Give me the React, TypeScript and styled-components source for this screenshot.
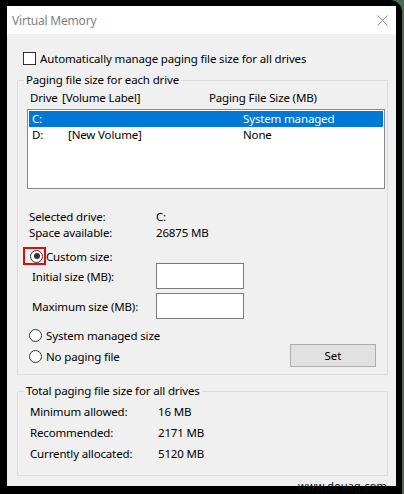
import React from 'react'
import styled, { createGlobalStyle } from 'styled-components'

const GlobalStyle = createGlobalStyle`
  html, body {
    margin: 0;
    padding: 0;
    background: #4e6b52;
  }
  body {
    font-family: 'Noto Sans', 'Liberation Sans', sans-serif;
    font-size: 11.5px;
    letter-spacing: -0.15px;
    color: #000;
  }
`

const Frame = styled.div`
  position: relative;
  width: 402px;
  height: 494px;
  box-sizing: border-box;
  padding: 6px 6px 8px 7px;
  background: #000;
  border-top-right-radius: 12px;
`

const Window = styled.div`
  height: 100%;
  display: flex;
  flex-direction: column;
  background: #f0f0f0;
`

const TitleBar = styled.div`
  height: 28px;
  flex: none;
  display: flex;
  align-items: center;
  justify-content: space-between;
  padding: 0 8px 0 5px;
  background: #fff;
`

const Title = styled.span`
  color: #808080;
  font-size: 12px;
  letter-spacing: -0.2px;
`

const Body = styled.div`
  display: flex;
  flex-direction: column;
  padding: 16px 8px 0 10px;
`

const CheckRow = styled.label`
  height: 16px;
  display: flex;
  align-items: center;
  gap: 4px;
  padding-left: 6px;
`

const CheckBox = styled.span`
  width: 11px;
  height: 11px;
  border: 1px solid #333;
  background: #fff;
`

const Group = styled.fieldset<{ $top: number; $bottom: number }>`
  margin: ${(p) => p.$top}px 0 0 0;
  padding: 0 0 ${(p) => p.$bottom}px 0;
  border: 1px solid #dcdcdc;
  min-width: 0;
`

const Legend = styled.legend`
  margin-left: 6px;
  padding: 0 2px;
  line-height: 16px;
`

const HeaderRow = styled.div`
  display: grid;
  grid-template-columns: 32px 147px 1fr;
  height: 16px;
  line-height: 16px;
  margin-top: 2px;
  padding-left: 12px;
`

const ListBox = styled.div`
  height: 76px;
  margin: 3px 2px 0 9px;
  padding: 1px;
  border: 1px solid #828790;
  background: #fff;
`

const ListRow = styled.div<{ $selected?: boolean }>`
  display: grid;
  grid-template-columns: 36px 175px 1fr;
  height: 16px;
  line-height: 16px;
  padding-left: 3px;
  background: ${(p) => (p.$selected ? '#0078d7' : 'transparent')};
  color: ${(p) => (p.$selected ? '#fff' : '#000')};
`

const InfoGrid = styled.div<{ $top: number; $gap: number; $left: number; $col: number }>`
  display: grid;
  grid-template-columns: ${(p) => p.$col}px 1fr;
  row-gap: ${(p) => p.$gap}px;
  margin-top: ${(p) => p.$top}px;
  padding-left: ${(p) => p.$left}px;
  line-height: 16px;
`

const RadioRow = styled.label<{ $left: number }>`
  height: 16px;
  display: flex;
  align-items: center;
  gap: 4px;
  padding-left: ${(p) => p.$left}px;
`

const Radio = styled.span<{ $checked?: boolean }>`
  position: relative;
  width: 11px;
  height: 11px;
  flex: none;
  border: 1px solid #333;
  border-radius: 50%;
  background: #fff;
  &::after {
    content: '';
    display: ${(p) => (p.$checked ? 'block' : 'none')};
    position: absolute;
    left: 2.5px;
    top: 2.5px;
    width: 6px;
    height: 6px;
    border-radius: 50%;
    background: #333;
  }
`

const Highlight = styled.span`
  display: flex;
  align-items: center;
  box-sizing: border-box;
  width: 23px;
  height: 18px;
  margin: -1px 0 -1px -7px;
  padding-left: 5px;
  border: 2px solid #e00d0d;
`

const CustomRow = styled.div`
  height: 16px;
  display: flex;
  align-items: center;
  margin-top: 7px;
  padding-left: 12px;
`

const FieldRow = styled.div`
  display: grid;
  grid-template-columns: 124px 88px;
  align-items: center;
  height: 26px;
  padding-left: 14px;
`

const Fields = styled.div`
  display: flex;
  flex-direction: column;
  gap: 4px;
  margin-top: -1px;
`

const Input = styled.input`
  box-sizing: border-box;
  width: 88px;
  height: 26px;
  margin: 0;
  border: 1px solid #7a7a7a;
  background: #fff;
  font: inherit;
`

const LowerRow = styled.div`
  display: flex;
  justify-content: space-between;
  align-items: flex-end;
  margin-top: 8px;
  padding-right: 11px;
`

const RadioColumn = styled.div`
  display: flex;
  flex-direction: column;
  gap: 5px;
`

const Button = styled.button`
  width: 86px;
  height: 23px;
  margin: 0 0 -3px 0;
  padding: 0;
  border: 1px solid #adadad;
  background: #e1e1e1;
  color: #000;
  font: inherit;
`

const Watermark = styled.span`
  position: absolute;
  right: 15px;
  bottom: 2px;
  font-size: 11px;
  line-height: 13px;
  letter-spacing: 0.2px;
  color: #111;
`

const CloseIcon = () => (
  <svg width="11" height="11" viewBox="0 0 11 11">
    <path d="M0.5 0.5 L10.5 10.5 M10.5 0.5 L0.5 10.5" stroke="#8a8a8a" strokeWidth="1" fill="none" />
  </svg>
)

const App: React.FC = () => {
  return (
    <>
      <GlobalStyle />
      <Frame>
        <Window>
          <TitleBar>
            <Title>Virtual Memory</Title>
            <CloseIcon />
          </TitleBar>
          <Body>
            <CheckRow>
              <CheckBox />
              Automatically manage paging file size for all drives
            </CheckRow>

            <Group $top={6} $bottom={10}>
              <Legend>Paging file size for each drive</Legend>
              <HeaderRow>
                <span>Drive</span>
                <span>[Volume Label]</span>
                <span>Paging File Size (MB)</span>
              </HeaderRow>
              <ListBox>
                <ListRow $selected>
                  <span>C:</span>
                  <span></span>
                  <span>System managed</span>
                </ListRow>
                <ListRow>
                  <span>D:</span>
                  <span>[New Volume]</span>
                  <span>None</span>
                </ListRow>
              </ListBox>

              <InfoGrid $top={20} $gap={0} $left={11} $col={127}>
                <span>Selected drive:</span>
                <span>C:</span>
                <span>Space available:</span>
                <span>26875 MB</span>
              </InfoGrid>

              <CustomRow>
                <Highlight>
                  <Radio $checked />
                </Highlight>
                <span>Custom size:</span>
              </CustomRow>

              <Fields>
                <FieldRow>
                  <span>Initial size (MB):</span>
                  <Input />
                </FieldRow>
                <FieldRow>
                  <span>Maximum size (MB):</span>
                  <Input />
                </FieldRow>
              </Fields>

              <LowerRow>
                <RadioColumn>
                  <RadioRow $left={11}>
                    <Radio />
                    System managed size
                  </RadioRow>
                  <RadioRow $left={11}>
                    <Radio />
                    No paging file
                  </RadioRow>
                </RadioColumn>
                <Button>Set</Button>
              </LowerRow>
            </Group>

            <Group $top={8} $bottom={13}>
              <Legend>Total paging file size for all drives</Legend>
              <InfoGrid $top={5} $gap={5} $left={12} $col={128}>
                <span>Minimum allowed:</span>
                <span>16 MB</span>
                <span>Recommended:</span>
                <span>2171 MB</span>
                <span>Currently allocated:</span>
                <span>5120 MB</span>
              </InfoGrid>
            </Group>
          </Body>
        </Window>
        <Watermark>www.deuag.com</Watermark>
      </Frame>
    </>
  )
}

export default App
